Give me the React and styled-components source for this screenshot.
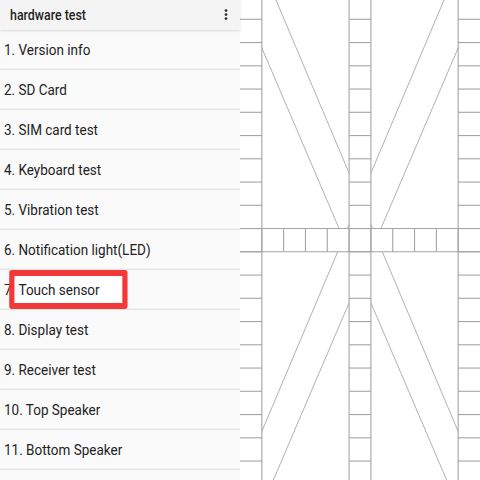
import React from "react";
import styled, { createGlobalStyle } from "styled-components";

const GlobalStyle = createGlobalStyle`
  html, body { margin: 0; padding: 0; background: #ffffff; }
  body { font-family: Roboto, "Noto Sans", "Liberation Sans", sans-serif; }
`;

const Screen = styled.div`
  display: flex;
  width: 480px;
  height: 480px;
  overflow: hidden;
`;

const MenuPanel = styled.div`
  width: 240px;
  flex: none;
  display: flex;
  flex-direction: column;
  background: #fafafa;
`;

const Toolbar = styled.div`
  position: relative;
  z-index: 1;
  height: 30px;
  flex: none;
  display: flex;
  align-items: center;
  justify-content: space-between;
  padding: 0 12px 0 10px;
  background: #f4f4f4;
  box-shadow: 0 1px 2px rgba(0, 0, 0, 0.14);
`;

const Title = styled.span`
  font-family: Roboto, "Noto Sans", sans-serif;
  font-size: 14px;
  font-weight: 500;
  color: #1f1f1f;
  white-space: nowrap;
  transform: scaleX(0.885);
  transform-origin: left center;
`;

const List = styled.div`
  display: flex;
  flex-direction: column;
`;

const Row = styled.div`
  height: 40px;
  flex: none;
  display: flex;
  align-items: center;
  padding-left: 4px;
  padding-top: 1px;
  box-sizing: border-box;
  box-shadow: inset 0 -1.5px 0 #e6e6e6;
`;

const Label = styled.span`
  font-family: Roboto, "Noto Sans", sans-serif;
  font-size: 15.5px;
  line-height: 39px;
  color: #222222;
  white-space: nowrap;
  transform: scaleX(0.87);
  transform-origin: left center;
`;

const Highlight = styled.span`
  position: relative;
  z-index: 0;
  display: inline-block;
  line-height: 39px;
  &::before {
    content: "";
    position: absolute;
    z-index: -1;
    left: -10.3px;
    top: -1.5px;
    width: 136px;
    height: 39px;
    box-sizing: border-box;
    border-style: solid;
    border-color: #f33838;
    border-width: 6px 6.9px;
    border-radius: 3px;
    background: #ffffff;
  }
`;

const TouchPanel = styled.div`
  width: 240px;
  height: 480px;
  flex: none;
  background: #ffffff;
`;

const items = [
  "Version info",
  "SD Card",
  "SIM card test",
  "Keyboard test",
  "Vibration test",
  "Notification light(LED)",
  "Touch sensor",
  "Display test",
  "Receiver test",
  "Top Speaker",
  "Bottom Speaker",
];

const MoreIcon = () => (
  <svg width="4" height="14" viewBox="0 0 4 14">
    <circle cx="2" cy="2.6" r="1.4" fill="#333" />
    <circle cx="2" cy="6.6" r="1.4" fill="#333" />
    <circle cx="2" cy="10.6" r="1.4" fill="#333" />
  </svg>
);

const W = 240;
const CW = 240 / 11;
const Y0 = -3.95;
const RH = 23.25;
const ROWS = 21;
const CENTER_COL = 5;
const CENTER_ROW = 10;

const TouchGrid = () => {
  const stroke = "#a4a4a4";
  const lines = [];
  const yTop = Y0;
  const yBot = Y0 + ROWS * RH;
  const colX = (c) => c * CW;
  const rowY = (r) => Y0 + r * RH;
  const cols = [0, CENTER_COL, 10];
  [colX(1), colX(CENTER_COL), colX(CENTER_COL + 1), colX(10)].forEach((x, i) =>
    lines.push(<line key={"v" + i} x1={x} y1={yTop} x2={x} y2={yBot} />)
  );
  for (let r = 1; r < ROWS; r++) {
    const y = rowY(r);
    cols.forEach((c) =>
      lines.push(
        <line key={`h${r}-${c}`} x1={colX(c)} y1={y} x2={colX(c + 1)} y2={y} />
      )
    );
  }
  const cy1 = rowY(CENTER_ROW);
  const cy2 = rowY(CENTER_ROW + 1);
  lines.push(<line key="cr1" x1={0} y1={cy1} x2={W} y2={cy1} />);
  lines.push(<line key="cr2" x1={0} y1={cy2} x2={W} y2={cy2} />);
  for (let c = 1; c < 11; c++) {
    const x = colX(c);
    lines.push(<line key={"cv" + c} x1={x} y1={cy1} x2={x} y2={cy2} />);
  }

  const diag = (x0, y0, k, ya, yb) => [x0 + (ya - y0) * k, ya, x0 + (yb - y0) * k, yb];
  const a1 = diag(36, 0, 0.4222, -10, 440);
  const a2 = diag(22, 48.3, 0.4278, 40, 490);
  const mirror = ([x1, y1, x2, y2]) => [W - x1, y1, W - x2, y2];
  const diags = [a1, a2, mirror(a1), mirror(a2)];

  return (
    <svg width="240" height="480" viewBox="0 0 240 480">
      <g stroke="#a8a8a8" strokeWidth="0.9">
        {diags.map(([x1, y1, x2, y2], i) => (
          <line key={"d" + i} x1={x1} y1={y1} x2={x2} y2={y2} />
        ))}
      </g>
      <g fill="#ffffff">
        <rect x={0} y={yTop} width={CW} height={yBot - yTop} />
        <rect x={colX(10)} y={yTop} width={W - colX(10)} height={yBot - yTop} />
        <rect x={colX(CENTER_COL)} y={yTop} width={CW} height={yBot - yTop} />
        <rect x={0} y={cy1} width={W} height={cy2 - cy1} />
      </g>
      <g stroke={stroke} strokeWidth="1.1">{lines}</g>
    </svg>
  );
};

export default function App() {
  return (
    <>
      <GlobalStyle />
      <Screen>
        <MenuPanel>
          <Toolbar>
            <Title>hardware test</Title>
            <MoreIcon />
          </Toolbar>
          <List>
            {items.map((name, i) => (
              <Row key={name}>
                {name === "Touch sensor" ? (
                  <Label>
                    {i + 1}. <Highlight>{name}</Highlight>
                  </Label>
                ) : (
                  <Label>
                    {i + 1}. {name}
                  </Label>
                )}
              </Row>
            ))}
            <Row />
          </List>
        </MenuPanel>
        <TouchPanel>
          <TouchGrid />
        </TouchPanel>
      </Screen>
    </>
  );
}
